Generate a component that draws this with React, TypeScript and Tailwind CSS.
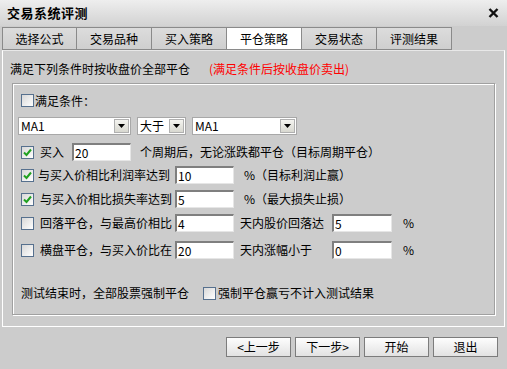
import type { ReactNode } from "react";

const FONT = { fontFamily: '"Noto Sans CJK SC", "Liberation Sans", sans-serif' };

const TABS = ["选择公式", "交易品种", "买入策略", "平仓策略", "交易状态", "评测结果"];
const ACTIVE_TAB = 3;

function CheckBox({ checked }: { checked?: boolean }) {
    return (
        <span className="flex h-[13px] w-[13px] shrink-0 items-center justify-center border border-[#56708e] bg-gradient-to-br from-[#d8d8d8] to-[#ffffff]">
            {checked && (
                <svg width="9" height="9" viewBox="0 0 9 9">
                    <path d="M1 4.5 L3.5 7 L8 1.5" fill="none" stroke="#21a121" strokeWidth="2" />
                </svg>
            )}
        </span>
    );
}

function TextBox({ value, width = 59 }: { value: string; width?: number }) {
    return (
        <span
            className="flex h-[18px] shrink-0 items-center border-t-2 border-l-2 border-t-[#7f7f7f] border-l-[#7f7f7f] border-b border-r border-b-[#e6e6e6] border-r-[#e6e6e6] bg-white pl-[1px] text-[12px] leading-none text-black"
            style={{ width }}
        >
            {value}
        </span>
    );
}

function Select({ value, width }: { value: string; width: number }) {
    return (
        <span
            className="flex h-[18px] shrink-0 items-center border border-[#a8a8a8] bg-white pl-[2px] text-[12px] leading-none"
            style={{ width }}
        >
            <span className="flex-1">{value}</span>
            <span className="mr-[1px] flex h-[14px] w-[15px] items-center justify-center border border-[#b0b0b0] bg-gradient-to-b from-[#f4f4f0] to-[#d8d8d0]">
                <svg width="7" height="4" viewBox="0 0 7 4">
                    <path d="M0 0 H7 L3.5 4 Z" fill="#000" />
                </svg>
            </span>
        </span>
    );
}

function Row({ children, className = "" }: { children: ReactNode; className?: string }) {
    return <div className={`flex h-[18px] items-center leading-none ${className}`}>{children}</div>;
}

function Button({ label }: { label: string }) {
    return (
        <button className="flex h-[20px] w-[65px] items-center justify-center border border-[#7c7c7c] bg-gradient-to-b from-[#fdfdfd] to-[#e2e2e2] text-[12px] leading-none text-black">
            {label}
        </button>
    );
}

export default function App() {
    return (
        <div className="flex h-[369px] w-[507px] flex-col bg-[#cccccc] text-[12px] text-black" style={FONT}>
            {/* title bar */}
            <div className="flex h-[26px] items-center justify-between bg-gradient-to-b from-[#eeeeee] to-[#d2d2d2] pl-[7px] pr-[8px]">
                <span className="text-[13px] font-bold tracking-[0.5px]">交易系统评测</span>
                <svg width="11" height="10" viewBox="0 0 11 10">
                    <path d="M1.5 1 L9.5 9 M9.5 1 L1.5 9" stroke="#111" strokeWidth="2.4" />
                </svg>
            </div>

            {/* tabs */}
            <div className="mt-[1px] flex h-[23px] pl-[2px]">
                {TABS.map((tab, i) => (
                    <div
                        key={tab}
                        className={`flex w-[75px] items-center justify-center border border-[#8a8a8a] text-[12px] ${
                            i > 0 ? "border-l-0" : ""
                        } ${i === ACTIVE_TAB ? "bg-white" : "bg-gradient-to-b from-[#dcdcdc] to-[#cfcfcf]"}`}
                    >
                        {tab}
                    </div>
                ))}
            </div>

            {/* tab page */}
            <div className="mx-[2px] flex h-[277px] flex-col border border-white border-t-[#e8e8e8]">
                <div className="mt-[11px] flex h-[14px] items-center pl-[7px] leading-none">
                    <span>满足下列条件时按收盘价全部平仓</span>
                    <span className="ml-[19px] text-[#ff0000]">(满足条件后按收盘价卖出)</span>
                </div>

                <div className="mx-[9px] mt-[7px] flex h-[232px] flex-col border border-[#a0a0a0] shadow-[inset_1px_1px_0_#ffffff,1px_1px_0_#ffffff]">
                    <div className="mt-[10px] flex h-[13px] items-center pl-[8px] leading-none">
                        <CheckBox />
                        <span className="ml-[1px]">满足条件：</span>
                    </div>

                    <div className="mt-[10px] flex h-[18px] items-center pl-[5px]">
                        <Select value="MA1" width={113} />
                        <span className="ml-[6px]" />
                        <Select value="大于" width={49} />
                        <span className="ml-[6px]" />
                        <Select value="MA1" width={105} />
                    </div>

                    <Row className="mt-[8px] pl-[8px]">
                        <CheckBox checked />
                        <span className="ml-[6px] w-[32px]">买入</span>
                        <TextBox value="20" />
                        <span className="ml-[9px]">个周期后，无论涨跌都平仓（目标周期平仓）</span>
                    </Row>

                    <Row className="mt-[5px] pl-[8px]">
                        <CheckBox checked />
                        <span className="ml-[4px] w-[137px]">与买入价相比利润率达到</span>
                        <TextBox value="10" />
                        <span className="ml-[10px]">%（目标利润止赢）</span>
                    </Row>

                    <Row className="mt-[6px] pl-[8px]">
                        <CheckBox checked />
                        <span className="ml-[6px] w-[135px]">与买入价相比损失率达到</span>
                        <TextBox value="5" />
                        <span className="ml-[10px]">%（最大损失止损）</span>
                    </Row>

                    <Row className="mt-[6px] pl-[8px]">
                        <CheckBox />
                        <span className="ml-[6px] w-[135px]">回落平仓，与最高价相比</span>
                        <TextBox value="4" />
                        <span className="ml-[6px] w-[92px]">天内股价回落达</span>
                        <TextBox value="5" width={60} />
                        <span className="ml-[11px]">%</span>
                    </Row>

                    <Row className="mt-[9px] pl-[8px]">
                        <CheckBox />
                        <span className="ml-[6px] w-[135px]">横盘平仓，与买入价比在</span>
                        <TextBox value="20" />
                        <span className="ml-[6px] w-[92px]">天内涨幅小于</span>
                        <TextBox value="0" width={60} />
                        <span className="ml-[11px]">%</span>
                    </Row>

                    <Row className="mt-[25px] pl-[8px]">
                        <span>测试结束时，全部股票强制平仓</span>
                        <span className="ml-[14px]" />
                        <CheckBox />
                        <span className="ml-[2px]">强制平仓赢亏不计入测试结果</span>
                    </Row>
                </div>
            </div>

            {/* footer buttons */}
            <div className="mt-[10px] flex justify-end gap-[4px] pr-[9px]">
                <Button label="<上一步" />
                <Button label="下一步>" />
                <Button label="开始" />
                <Button label="退出" />
            </div>
        </div>
    );
}
